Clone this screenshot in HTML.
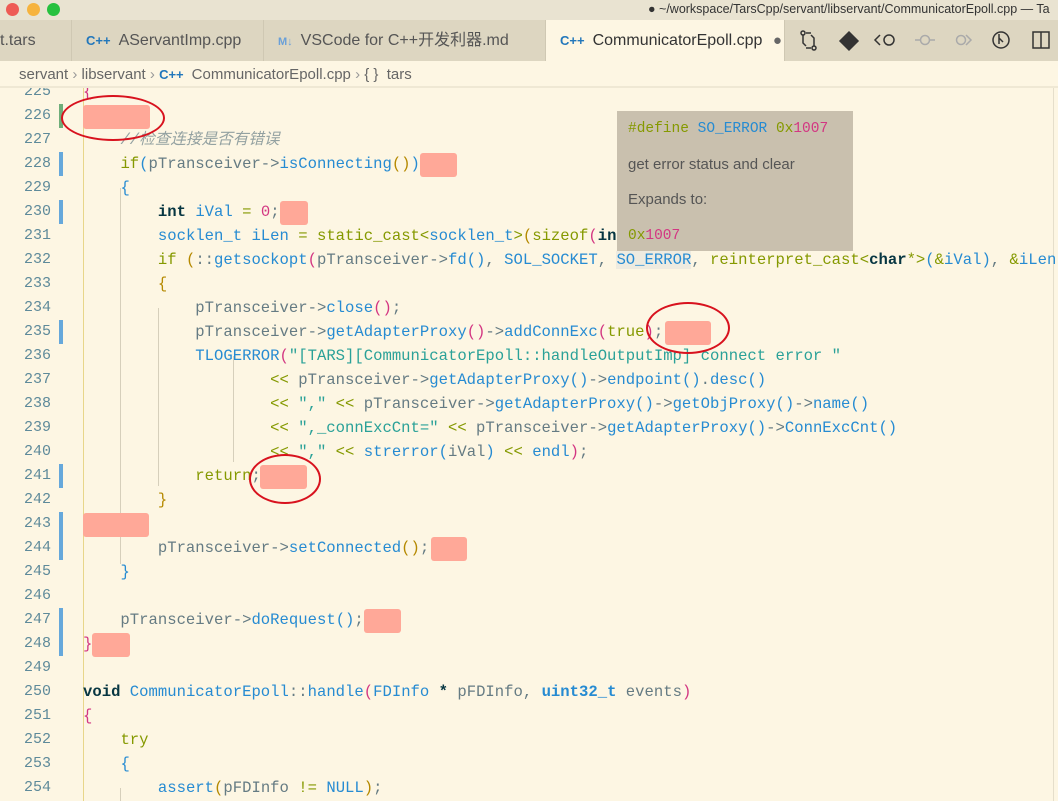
<!DOCTYPE html>
<html><head><meta charset="utf-8"><style>
*{margin:0;padding:0;box-sizing:border-box}
body{width:1058px;height:801px;overflow:hidden;background:#FDF6E3;position:relative;font-family:"Liberation Sans","Noto Sans CJK SC",sans-serif}
.title{position:absolute;left:0;top:0;width:1058px;height:20px;background:#E9E3D1;}
.dot{position:absolute;top:3px;width:13px;height:13px;border-radius:50%}
.ttl{position:absolute;left:648px;top:2px;font-size:12.5px;color:#333;white-space:nowrap}
.tabs{position:absolute;left:0;top:20px;width:1058px;height:41px;background:#DDD6C1}
.tab{position:absolute;top:0;height:41px;border-right:1px solid #CFC8B3;font-size:16px;color:#555;line-height:41px;white-space:nowrap;padding-left:14px}
.cpp{color:#2277BB;font-weight:bold;font-size:13px;margin-right:8px}
.bc{position:absolute;left:19px;top:61px;height:26px;line-height:27px;font-size:15px;color:#666;white-space:nowrap}
.editor{position:absolute;left:0;top:88px;width:1058px;height:713px;overflow:hidden}
.ln{position:absolute;left:0;width:51px;text-align:right;font-family:"Liberation Mono",monospace;font-size:15px;color:#5E8A9A;height:24px;line-height:24px}
.cl{position:absolute;left:83px;height:24px;line-height:24px;font-family:"Liberation Mono",monospace;font-size:15.6px;white-space:pre;color:#657B83}
.k{color:#859900}.f{color:#268BD2}.s{color:#2AA198}.n{color:#D33682}.b{color:#073642;font-weight:bold}.c{color:#93A1A1;font-style:italic}
.y{color:#B58900}.m{color:#D33682}.bl{color:#268BD2}.o{color:#859900}
.bar{position:absolute;left:59px;width:4px;background:#66A8DB}
.pk{position:absolute;background:#FFA898;border-radius:3px;height:24px}
.g{position:absolute;width:1px;background:#D6CFBB}
.circ{position:absolute;border:2px solid #D8121E;border-radius:50%}
.tip{position:absolute;left:617px;top:23px;width:236px;height:140px;background:#C9C0AE;padding:9px 11px;color:#555}
.tip div{height:35.5px;line-height:18px}
</style></head><body>
<div class="title">
<div class="dot" style="left:6px;background:#EE5B55"></div>
<div class="dot" style="left:27px;background:#F6B33D"></div>
<div class="dot" style="left:47px;background:#27C13F"></div>
<div class="ttl">● ~/workspace/TarsCpp/servant/libservant/CommunicatorEpoll.cpp — Ta</div>
</div>
<div class="tabs">
<div class="tab" style="left:-20px;width:92px;padding-left:20px">t.tars</div>
<div class="tab" style="left:72px;width:192px"><span class="cpp">C++</span>AServantImp.cpp</div>
<div class="tab" style="left:264px;width:282px"><span class="cpp" style="color:#6AA0D8;font-size:11px">M↓</span>VSCode for C++开发利器.md</div>
<div class="tab" style="left:546px;width:239px;background:#FDF6E3;color:#333"><span class="cpp">C++</span>CommunicatorEpoll.cpp <span style="color:#666;font-size:15px;margin-left:6px">●</span></div>
<svg style="position:absolute;left:790px;top:0" width="268" height="41" fill="none" stroke="#333" stroke-width="1.5">
<circle cx="13" cy="13" r="2"/><circle cx="24" cy="28" r="2"/><path d="M13 15v8l3 3M24 26v-8l-3-3M16 13h5M21 28h-5"/>
<path d="M59 12l9 9-9 9-9-9z" fill="#333"/>
<path d="M90 15l-5 5 5 5"/><circle cx="99" cy="20" r="5"/>
<g stroke="#aaa"><circle cx="135" cy="20" r="4.5"/><path d="M125 20h5M140 20h5"/><circle cx="171" cy="20" r="4.5"/><path d="M176 15l5 5-5 5"/></g>
<circle cx="211" cy="20" r="8"/><path d="M209 14v10M209 18l4 4"/>
<rect x="243" y="12" width="16" height="16"/><path d="M251 12v16"/>
</svg>
</div>
<div class="bc">servant <span style="color:#999">›</span> libservant <span style="color:#999">›</span> <span class="cpp">C++</span>CommunicatorEpoll.cpp <span style="color:#999">›</span> { }&nbsp; tars</div>
<div style="position:absolute;left:0;top:86px;width:1058px;height:2px;background:#EFE8D4"></div>
<div class="editor">
<div class="g" style="left:83px;top:0;height:720px;background:#E8D68A"></div>
<div class="g" style="left:120px;top:100px;height:376px"></div>
<div class="g" style="left:158px;top:220px;height:178px"></div>
<div class="g" style="left:233px;top:268px;height:106px"></div>
<div class="g" style="left:120px;top:700px;height:20px"></div>
<div class="g" style="left:1053px;top:0;height:720px;background:#E5DECB"></div>
<div class="bar" style="top:16px;height:24px;background:#6FAE7A"></div>
<div class="bar" style="top:64px;height:24px"></div>
<div class="bar" style="top:112px;height:24px"></div>
<div class="bar" style="top:232px;height:24px"></div>
<div class="bar" style="top:376px;height:24px"></div>
<div class="bar" style="top:424px;height:48px"></div>
<div class="bar" style="top:520px;height:48px"></div>

<div class="ln" style="top:-8px">225</div><div class="cl" style="top:-8px"><span class="m">{</span></div>
<div class="ln" style="top:16px">226</div>
<div class="ln" style="top:40px">227</div><div class="cl" style="top:40px">    <span class="c">//检查连接是否有错误</span></div>
<div class="ln" style="top:64px">228</div><div class="cl" style="top:64px">    <span class="k">if</span><span class="bl">(</span>pTransceiver-&gt;<span class="f">isConnecting</span><span class="y">()</span><span class="bl">)</span></div>
<div class="ln" style="top:88px">229</div><div class="cl" style="top:88px">    <span class="bl">{</span></div>
<div class="ln" style="top:112px">230</div><div class="cl" style="top:112px">        <span class="b">int</span> <span class="f">iVal</span> <span class="o">=</span> <span class="n">0</span>;</div>
<div class="ln" style="top:136px">231</div><div class="cl" style="top:136px">        <span class="f">socklen_t iLen</span> <span class="o">=</span> <span class="k">static_cast</span><span class="k">&lt;</span><span class="f">socklen_t</span><span class="k">&gt;</span><span class="y">(</span><span class="k">sizeof</span><span class="m">(</span><span class="b">in</span></div>
<div class="ln" style="top:160px">232</div><div class="cl" style="top:160px">        <span class="k">if</span> <span class="y">(</span>::<span class="f">getsockopt</span><span class="m">(</span>pTransceiver-&gt;<span class="f">fd</span><span class="bl">()</span>, <span class="f">SOL_SOCKET</span>, <span class="f" style="background:#EEEBE0">SO_ERROR</span>, <span class="k">reinterpret_cast&lt;</span><span class="b">char</span><span class="k">*&gt;</span><span class="bl">(</span><span class="k">&amp;</span><span class="f">iVal</span><span class="bl">)</span>, <span class="k">&amp;</span><span class="f">iLen</span></div>
<div class="ln" style="top:184px">233</div><div class="cl" style="top:184px">        <span class="y">{</span></div>
<div class="ln" style="top:208px">234</div><div class="cl" style="top:208px">            pTransceiver-&gt;<span class="f">close</span><span class="m">()</span>;</div>
<div class="ln" style="top:232px">235</div><div class="cl" style="top:232px">            pTransceiver-&gt;<span class="f">getAdapterProxy</span><span class="m">()</span>-&gt;<span class="f">addConnExc</span><span class="m">(</span><span class="k">true</span><span class="m">)</span>;</div>
<div class="ln" style="top:256px">236</div><div class="cl" style="top:256px">            <span class="f">TLOGERROR</span><span class="m">(</span><span class="s">"[TARS][CommunicatorEpoll::handleOutputImp] connect error "</span></div>
<div class="ln" style="top:280px">237</div><div class="cl" style="top:280px">                    <span class="k">&lt;&lt;</span> pTransceiver-&gt;<span class="f">getAdapterProxy</span><span class="bl">()</span>-&gt;<span class="f">endpoint</span><span class="bl">()</span>.<span class="f">desc</span><span class="bl">()</span></div>
<div class="ln" style="top:304px">238</div><div class="cl" style="top:304px">                    <span class="k">&lt;&lt;</span> <span class="s">","</span> <span class="k">&lt;&lt;</span> pTransceiver-&gt;<span class="f">getAdapterProxy</span><span class="bl">()</span>-&gt;<span class="f">getObjProxy</span><span class="bl">()</span>-&gt;<span class="f">name</span><span class="bl">()</span></div>
<div class="ln" style="top:328px">239</div><div class="cl" style="top:328px">                    <span class="k">&lt;&lt;</span> <span class="s">",_connExcCnt="</span> <span class="k">&lt;&lt;</span> pTransceiver-&gt;<span class="f">getAdapterProxy</span><span class="bl">()</span>-&gt;<span class="f">ConnExcCnt</span><span class="bl">()</span></div>
<div class="ln" style="top:352px">240</div><div class="cl" style="top:352px">                    <span class="k">&lt;&lt;</span> <span class="s">","</span> <span class="k">&lt;&lt;</span> <span class="f">strerror</span><span class="bl">(</span>iVal<span class="bl">)</span> <span class="k">&lt;&lt;</span> <span class="f">endl</span><span class="m">)</span>;</div>
<div class="ln" style="top:376px">241</div><div class="cl" style="top:376px">            <span class="k">return</span>;</div>
<div class="ln" style="top:400px">242</div><div class="cl" style="top:400px">        <span class="y">}</span></div>
<div class="ln" style="top:424px">243</div>
<div class="ln" style="top:448px">244</div><div class="cl" style="top:448px">        pTransceiver-&gt;<span class="f">setConnected</span><span class="y">()</span>;</div>
<div class="ln" style="top:472px">245</div><div class="cl" style="top:472px">    <span class="bl">}</span></div>
<div class="ln" style="top:496px">246</div>
<div class="ln" style="top:520px">247</div><div class="cl" style="top:520px">    pTransceiver-&gt;<span class="f">doRequest</span><span class="bl">()</span>;</div>
<div class="ln" style="top:544px">248</div><div class="cl" style="top:544px"><span class="m">}</span></div>
<div class="ln" style="top:568px">249</div>
<div class="ln" style="top:592px">250</div><div class="cl" style="top:592px"><span class="b">void</span> <span class="f">CommunicatorEpoll</span>::<span class="f">handle</span><span class="m">(</span><span class="f">FDInfo</span> <span class="b">*</span> pFDInfo, <span class="b" style="color:#268BD2">uint32_t</span> events<span class="m">)</span></div>
<div class="ln" style="top:616px">251</div><div class="cl" style="top:616px"><span class="m">{</span></div>
<div class="ln" style="top:640px">252</div><div class="cl" style="top:640px">    <span class="k">try</span></div>
<div class="ln" style="top:664px">253</div><div class="cl" style="top:664px">    <span class="bl">{</span></div>
<div class="ln" style="top:688px">254</div><div class="cl" style="top:688px">        <span class="f">assert</span><span class="y">(</span>pFDInfo <span class="k">!=</span> <span class="f">NULL</span><span class="y">)</span>;</div>

<div class="pk" style="left:83px;top:17px;width:67px"></div>
<div class="pk" style="left:420px;top:65px;width:37px"></div>
<div class="pk" style="left:280px;top:113px;width:28px"></div>
<div class="pk" style="left:665px;top:233px;width:46px"></div>
<div class="pk" style="left:260px;top:377px;width:47px"></div>
<div class="pk" style="left:83px;top:425px;width:66px"></div>
<div class="pk" style="left:431px;top:449px;width:36px"></div>
<div class="pk" style="left:364px;top:521px;width:37px"></div>
<div class="pk" style="left:92px;top:545px;width:38px"></div>

<div class="circ" style="left:61px;top:7px;width:104px;height:46px"></div>
<div class="circ" style="left:646px;top:214px;width:84px;height:52px"></div>
<div class="circ" style="left:249px;top:366px;width:72px;height:50px"></div>

<div class="tip">
<div style="font-family:'Liberation Mono',monospace;font-size:14.5px"><span class="k">#define</span> <span class="f">SO_ERROR</span> <span class="k">0x</span><span class="n">1007</span></div>
<div style="font-size:15px">get error status and clear</div>
<div style="font-size:15px">Expands to:</div>
<div style="font-family:'Liberation Mono',monospace;font-size:14.5px"><span class="k">0x</span><span class="n">1007</span></div>
</div>
</div>
</body></html>
